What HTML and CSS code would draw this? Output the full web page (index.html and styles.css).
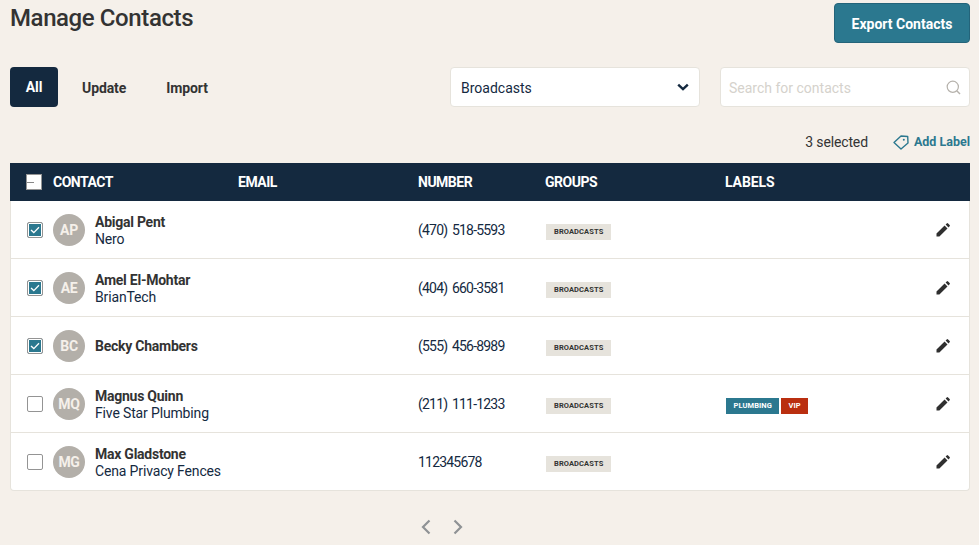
FILE: index.html
```html
<!DOCTYPE html>
<html lang="en">
<head>
    <meta charset="UTF-8">
    <meta name="viewport" content="width=device-width, initial-scale=1.0">
    <title>Manage Contacts</title>
    <link rel="stylesheet" href="styles.css">
</head>
<body>
    <div class="title-row">
        <h1>Manage Contacts</h1>
        <button class="export-btn">Export Contacts</button>
    </div>

    <div class="filter-row">
        <div class="tabs">
            <a class="tab tab-active">All</a>
            <a class="tab">Update</a>
            <a class="tab">Import</a>
        </div>
        <div class="filters">
            <div class="select">
                <span>Broadcasts</span>
                <svg width="12" height="8" viewBox="0 0 12 8"><path d="M1.2 1.6 6 6.2l4.8-4.6" fill="none" stroke="#14293f" stroke-width="2.4"/></svg>
            </div>
            <div class="search">
                <span>Search for contacts</span>
                <svg width="15" height="15" viewBox="0 0 15 15"><circle cx="6.8" cy="6.8" r="5.6" fill="none" stroke="#b5b1ab" stroke-width="1.2"/><path d="M11 11l3 3" stroke="#b5b1ab" stroke-width="1.4"/></svg>
            </div>
        </div>
    </div>

    <div class="selection-row">
        <span class="selected-count">3 selected</span>
        <a class="add-label">
            <svg width="16" height="15" viewBox="0 0 16 15"><path d="M1 7.500 8 1l6.700.500L15 8l-7 6z" fill="none" stroke="#2b788f" stroke-width="1.400" stroke-linejoin="round"/><circle cx="10.800" cy="4.800" r="1" fill="#2b788f"/></svg>
            Add Label
        </a>
    </div>

    <div class="table-head row-grid">
        <span class="check check-mixed"></span>
        <span>CONTACT</span>
        <span>EMAIL</span>
        <span>NUMBER</span>
        <span>GROUPS</span>
        <span class="head-labels">LABELS</span>
        <span></span>
    </div>

    <div class="table-body">
        <div class="row row-grid">
            <span class="check check-on"><svg width="10" height="8" viewBox="0 0 10 8"><path d="M1 4l2.800 2.600L9 1.200" fill="none" stroke="#fff" stroke-width="1.300"/></svg></span>
            <div class="contact">
                <span class="avatar">AP</span>
                <div><div class="name">Abigal Pent</div><div class="company">Nero</div></div>
            </div>
            <span></span>
            <span class="number">(470) 518-5593</span>
            <div><span class="tag">BROADCASTS</span></div>
            <span></span>
            <svg class="edit" width="14" height="14" viewBox="0 0 14 14"><path d="M0.500 13.500V10.600L8.600 2.500l2.900 2.900-8.100 8.100zM9.600 1.500 10.700.4a1 1 0 0 1 1.400 0l1.500 1.500a1 1 0 0 1 0 1.400l-1.100 1.100z" fill="#2f2f2f"/></svg>
        </div>
        <div class="row row-grid">
            <span class="check check-on"><svg width="10" height="8" viewBox="0 0 10 8"><path d="M1 4l2.800 2.600L9 1.200" fill="none" stroke="#fff" stroke-width="1.300"/></svg></span>
            <div class="contact">
                <span class="avatar">AE</span>
                <div><div class="name">Amel El-Mohtar</div><div class="company">BrianTech</div></div>
            </div>
            <span></span>
            <span class="number">(404) 660-3581</span>
            <div><span class="tag">BROADCASTS</span></div>
            <span></span>
            <svg class="edit" width="14" height="14" viewBox="0 0 14 14"><path d="M0.500 13.500V10.600L8.600 2.500l2.900 2.900-8.100 8.100zM9.600 1.500 10.700.4a1 1 0 0 1 1.400 0l1.500 1.500a1 1 0 0 1 0 1.400l-1.100 1.100z" fill="#2f2f2f"/></svg>
        </div>
        <div class="row row-grid">
            <span class="check check-on"><svg width="10" height="8" viewBox="0 0 10 8"><path d="M1 4l2.800 2.600L9 1.200" fill="none" stroke="#fff" stroke-width="1.300"/></svg></span>
            <div class="contact">
                <span class="avatar">BC</span>
                <div><div class="name">Becky Chambers</div></div>
            </div>
            <span></span>
            <span class="number">(555) 456-8989</span>
            <div><span class="tag">BROADCASTS</span></div>
            <span></span>
            <svg class="edit" width="14" height="14" viewBox="0 0 14 14"><path d="M0.500 13.500V10.600L8.600 2.500l2.900 2.900-8.100 8.100zM9.600 1.500 10.700.4a1 1 0 0 1 1.400 0l1.500 1.500a1 1 0 0 1 0 1.400l-1.100 1.100z" fill="#2f2f2f"/></svg>
        </div>
        <div class="row row-grid">
            <span class="check"></span>
            <div class="contact">
                <span class="avatar">MQ</span>
                <div><div class="name">Magnus Quinn</div><div class="company">Five Star Plumbing</div></div>
            </div>
            <span></span>
            <span class="number">(211) 111-1233</span>
            <div><span class="tag">BROADCASTS</span></div>
            <div class="labels"><span class="tag tag-teal">PLUMBING</span><span class="tag tag-red">VIP</span></div>
            <svg class="edit" width="14" height="14" viewBox="0 0 14 14"><path d="M0.500 13.500V10.600L8.600 2.500l2.900 2.900-8.100 8.100zM9.600 1.500 10.700.4a1 1 0 0 1 1.400 0l1.500 1.500a1 1 0 0 1 0 1.400l-1.100 1.100z" fill="#2f2f2f"/></svg>
        </div>
        <div class="row row-grid">
            <span class="check"></span>
            <div class="contact">
                <span class="avatar">MG</span>
                <div><div class="name">Max Gladstone</div><div class="company">Cena Privacy Fences</div></div>
            </div>
            <span></span>
            <span class="number">112345678</span>
            <div><span class="tag">BROADCASTS</span></div>
            <span></span>
            <svg class="edit" width="14" height="14" viewBox="0 0 14 14"><path d="M0.500 13.500V10.600L8.600 2.500l2.900 2.900-8.100 8.100zM9.600 1.500 10.700.4a1 1 0 0 1 1.400 0l1.500 1.500a1 1 0 0 1 0 1.400l-1.100 1.100z" fill="#2f2f2f"/></svg>
        </div>
    </div>

    <div class="pager">
        <svg width="12" height="16" viewBox="0 0 12 16"><path d="M9.500 1.500 3 8l6.500 6.500" fill="none" stroke="#8f9295" stroke-width="2.200"/></svg>
        <svg width="12" height="16" viewBox="0 0 12 16"><path d="M2.500 1.500 9 8l-6.500 6.500" fill="none" stroke="#8f9295" stroke-width="2.200"/></svg>
    </div>
</body>
</html>
```

FILE: styles.css
```css
* {
    box-sizing: border-box;
}
body {
    font-family: Roboto, "Liberation Sans", sans-serif;
    margin: 0;
    padding: 0 9px 0 10px;
    background-color: #f5f0ea;
    color: #2f2f2f;
    font-size: 14px;
    overflow: hidden;
}
.title-row {
    display: flex;
    justify-content: space-between;
    align-items: flex-start;
    height: 67px;
    padding-top: 3px;
}
h1 {
    margin: 0;
    font-size: 24px;
    line-height: 30px;
    font-weight: 500;
    letter-spacing: -0.4px;
    color: #333;
}
.export-btn {
    width: 136px;
    height: 40px;
    padding: 2px 0 0;
    background-color: #2b788f;
    border: 1px solid #24647a;
    border-radius: 4px;
    color: white;
    font-family: inherit;
    font-size: 14px;
    font-weight: 700;
}
.filter-row {
    display: flex;
    justify-content: space-between;
    height: 40px;
}
.tabs {
    display: flex;
    align-items: center;
    padding-top: 1px;
}
.tab {
    font-weight: 700;
    font-size: 14px;
    letter-spacing: -0.1px;
    margin-right: 40px;
    color: #333;
}
.tab-active {
    background-color: #14293f;
    color: white;
    width: 48px;
    height: 40px;
    line-height: 40px;
    margin-top: -1px;
    text-align: center;
    border-radius: 4px;
    margin-right: 24px;
}
.filters {
    display: flex;
    gap: 20px;
}
.select, .search {
    width: 250px;
    background-color: white;
    border: 1px solid #e6e3dc;
    border-radius: 4px;
    display: flex;
    align-items: center;
    justify-content: space-between;
}
.select span, .search span {
    padding-top: 2px;
}
.select {
    padding: 0 10px;
    color: #14293f;
}
.search {
    padding: 0 8px;
    color: #d5d2cc;
}
.selection-row {
    display: flex;
    justify-content: flex-end;
    align-items: flex-end;
    height: 56px;
    padding-bottom: 13px;
}
.selected-count {
    color: #333;
    margin-right: 25px;
    letter-spacing: -0.15px;
    line-height: 16px;
}
.add-label {
    display: flex;
    align-items: center;
    gap: 5px;
    color: #2b788f;
    font-weight: 700;
    font-size: 12.5px;
    line-height: 16px;
}
.row-grid {
    display: grid;
    grid-template-columns: 26px 185px 180px 127px 180px 1fr 14px;
    align-items: center;
    padding-left: 17px;
    padding-right: 20px;
}
.table-head {
    background-color: #14293f;
    color: white;
    height: 38px;
    padding-left: 16px;
    grid-template-columns: 27px 185px 180px 127px 180px 1fr 14px;
    font-weight: 700;
    font-size: 14px;
    letter-spacing: -0.5px;
}
.head-labels {
    letter-spacing: -0.1px;
}
.table-body {
    background-color: white;
    border: 1px solid #e6e3dc;
    border-top: none;
    border-radius: 0 0 4px 4px;
}
.row {
    height: 58px;
    padding-top: 1px;
    border-bottom: 1px solid #e6e3dc;
    padding-left: 16px;
    padding-right: 19px;
}
.row:last-child {
    border-bottom: none;
    height: 57px;
}
.check {
    width: 16px;
    height: 16px;
    border: 1px solid #949494;
    border-radius: 2px;
    background-color: white;
    display: flex;
    align-items: center;
    justify-content: center;
}
.check-on {
    background-color: #2b788f;
    box-shadow: inset 0 0 0 1px white;
}
.check-mixed {
    justify-content: flex-start;
    border-radius: 0;
}
.check-mixed::after {
    content: "";
    width: 7px;
    height: 1px;
    background-color: #888;
}
.contact {
    display: flex;
    align-items: center;
    gap: 10px;
}
.avatar {
    width: 32px;
    height: 32px;
    border-radius: 50%;
    background-color: #b3afa9;
    color: #f5f0ea;
    font-weight: 700;
    font-size: 14px;
    letter-spacing: -0.3px;
    display: flex;
    align-items: center;
    justify-content: center;
}
.name {
    font-weight: 700;
    font-size: 14px;
    line-height: 17px;
    letter-spacing: -0.25px;
    color: #333;
}
.company {
    font-size: 14px;
    line-height: 17px;
    margin-bottom: -2px;
    letter-spacing: -0.15px;
    color: #14293f;
}
.number {
    color: #14293f;
    letter-spacing: -0.8px;
    word-spacing: 2px;
}
.tag {
    display: inline-block;
    height: 16px;
    line-height: 16px;
    padding: 0 8px;
    background-color: #e6e3dc;
    color: #333;
    font-size: 7.5px;
    font-weight: 700;
    letter-spacing: 0.1px;
    vertical-align: top;
    margin-left: 1px;
    margin-top: 3px;
}
.labels {
    display: flex;
}
.tag-teal {
    padding: 0 7.5px;
    background-color: #2b788f;
    color: white;
}
.tag-red {
    padding: 0 7px;
    margin-left: 2px;
    background-color: #ba2f10;
    color: white;
}
.pager {
    display: flex;
    justify-content: center;
    gap: 20px;
    margin-top: 28px;
    padding-right: 96px;
}
```
